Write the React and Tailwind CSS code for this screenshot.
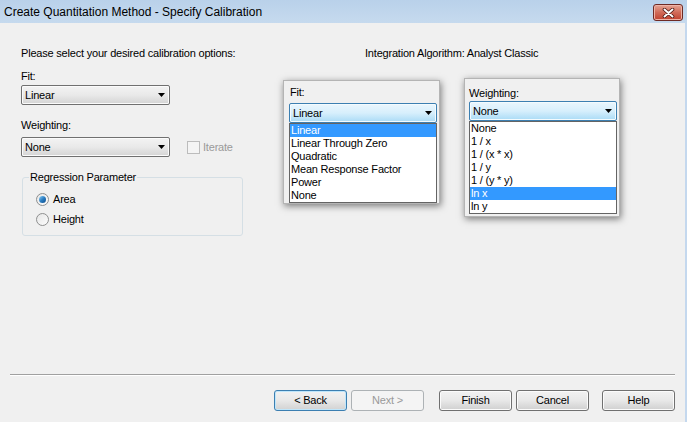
import React from 'react';

const Arrow = () => (
  <svg width="7" height="4" viewBox="0 0 7 4" className="shrink-0">
    <path d="M0 0h7L3.5 4z" fill="#000" />
  </svg>
);

// Windows 7 style drop-down combobox
const Combo = ({ text, open, className = '' }) => (
  <div
    className={`flex items-center justify-between h-[20px] pl-[3px] pr-[4px] rounded-[2px] border ${
      open
        ? 'border-[#3c7fb1] bg-linear-to-b from-[#eaf6fd] via-[#d7effc] to-[#a9dbf6] shadow-[inset_0_0_0_1px_#f4fbfe]'
        : 'border-[#707070] bg-linear-to-b from-[#f3f3f3] via-[#e9e9e9] to-[#d4d4d4] shadow-[inset_0_0_0_1px_#fbfbfb]'
    } ${className}`}
  >
    <span>{text}</span>
    <Arrow />
  </div>
);

const ListBox = ({ items, selected }) => (
  <div className="flex flex-col w-[148px] border border-[#646464] bg-white">
    {items.map((item) => (
      <div
        key={item}
        className={`h-[13px] pl-[1px] leading-[13px] whitespace-pre ${
          item === selected ? 'bg-[#3399ff] text-white' : ''
        }`}
      >
        {item}
      </div>
    ))}
  </div>
);

const Radio = ({ checked, label }) => (
  <div className="flex items-center h-[20px] gap-[4px]">
    <div className="w-[13px] h-[13px] rounded-full border border-[#8e8f8f] bg-linear-to-br from-[#e6e6e6] to-[#fcfcfc] flex items-center justify-center">
      {checked && (
        <div className="w-[7px] h-[7px] rounded-full bg-linear-to-br from-[#8ad0f6] via-[#2a7dc2] to-[#0f4d8c]" />
      )}
    </div>
    <span>{label}</span>
  </div>
);

const Button = ({ children, focused, disabled, className = '' }) => (
  <div
    className={`w-[73px] h-[21px] flex items-center justify-center rounded-[3px] border ${
      disabled
        ? 'border-[#adb2b5] bg-[#f4f4f4] text-[#9a9a9a]'
        : focused
        ? 'border-[#3c7fb1] bg-linear-to-b from-[#f2f2f2] via-[#e8e8e8] to-[#d2d2d2] shadow-[inset_0_0_0_1px_#bfe6fb]'
        : 'border-[#707070] bg-linear-to-b from-[#f2f2f2] via-[#e8e8e8] to-[#d0d0d0] shadow-[inset_0_0_0_1px_#fbfbfb]'
    } ${className}`}
  >
    {children}
  </div>
);

const fitItems = ['Linear', 'Linear Through Zero', 'Quadratic', 'Mean Response Factor', 'Power', 'None'];
const weightItems = ['None', '1 / x', '1 / (x * x)', '1 / y', '1 / (y * y)', 'ln x', 'ln y'];

export default function App() {
  return (
    <div className="relative w-[687px] h-[422px] overflow-hidden bg-[#f0f0f0] text-black text-[11px] leading-[13px] tracking-[-0.2px] font-['Liberation_Sans',Arial,sans-serif] flex flex-col">
      {/* title bar */}
      <div className="h-[23px] shrink-0 flex items-start justify-between pl-[4px] pr-[4px] bg-linear-to-b from-[#b9d1ea] to-[#c6daee]">
        <span className="mt-[5px] text-[12px] leading-[14px] tracking-normal">Create Quantitation Method - Specify Calibration</span>
        <div className="mt-[4px] w-[30px] h-[17px] rounded-[3px] border border-[#6e2a24] bg-linear-to-b from-[#e4a494] via-[#d06a58] to-[#c0402e] flex items-center justify-center shadow-[inset_0_0_0_1px_#eeb4a8]">
          <svg width="13" height="10" viewBox="0 0 13 10">
            <path d="M2.5 1.5l8 7M10.5 1.5l-8 7" stroke="#4a1712" strokeWidth="3.6" strokeLinecap="round" />
            <path d="M2.5 1.5l8 7M10.5 1.5l-8 7" stroke="#fff" strokeWidth="2" strokeLinecap="round" />
          </svg>
        </div>
      </div>

      {/* body */}
      <div className="flex-1 flex flex-col border-r-[2px] border-[#c4d8ee]">
        <div className="flex pt-[24px] pl-[21px]">
          <div className="w-[344px] flex flex-col">
            <span>Please select your desired calibration options:</span>
            <span className="mt-[10px]">Fit:</span>
            <Combo text="Linear" className="mt-[2px] w-[149px]" />
            <span className="mt-[14px]">Weighting:</span>
            <div className="mt-[5px] flex items-center">
              <Combo text="None" className="w-[149px]" />
              <div className="ml-[17px] w-[13px] h-[13px] border border-[#bcbcbc] bg-[#f4f4f4]" />
              <span className="ml-[3px] text-[#9a9a9a]">Iterate</span>
            </div>
            <fieldset className="mt-[14px] ml-[1px] w-[221px] border border-[#d5dfe5] rounded-[3px] px-0 pb-[6px] pt-[5px]">
              <legend className="ml-[6px] px-[1px]">Regression Parameter</legend>
              <div className="flex flex-col pl-[13px]">
                <Radio checked label="Area" />
                <Radio label="Height" />
              </div>
            </fieldset>
          </div>
          <span>Integration Algorithm: Analyst Classic</span>
        </div>

        {/* separator + buttons */}
        <div className="mt-auto mx-[10px] border-t border-t-[#a0a0a0] border-b border-b-[#ffffff]" />
        <div className="flex justify-end pr-[10px] mt-[14px] mb-[11px]">
          <Button focused>&lt; Back</Button>
          <Button disabled className="ml-[4px]">Next &gt;</Button>
          <Button className="ml-[15px]">Finish</Button>
          <Button className="ml-[4px]">Cancel</Button>
          <Button className="ml-[13px]">Help</Button>
        </div>
      </div>

      {/* pasted popup: Fit list open */}
      <div className="absolute left-[283px] top-[80px] w-[157px] h-[124px] bg-[#f0f0f0] border border-[#b4b4b4] shadow-[1px_2px_7px_rgba(0,0,0,0.5)] pl-[5px] pt-[5px] flex flex-col">
        <span className="ml-[1px]">Fit:</span>
        <Combo open text="Linear" className="mt-[4px] w-[148px]" />
        <ListBox items={fitItems} selected="Linear" />
      </div>

      {/* pasted popup: Weighting list open */}
      <div className="absolute left-[464px] top-[78px] w-[156px] h-[139px] bg-[#f0f0f0] border border-[#b4b4b4] shadow-[1px_2px_7px_rgba(0,0,0,0.5)] pl-[4px] pt-[8px] flex flex-col">
        <span>Weighting:</span>
        <Combo open text="None" className="mt-[1px] w-[148px]" />
        <ListBox items={weightItems} selected="ln x" />
      </div>
    </div>
  );
}
